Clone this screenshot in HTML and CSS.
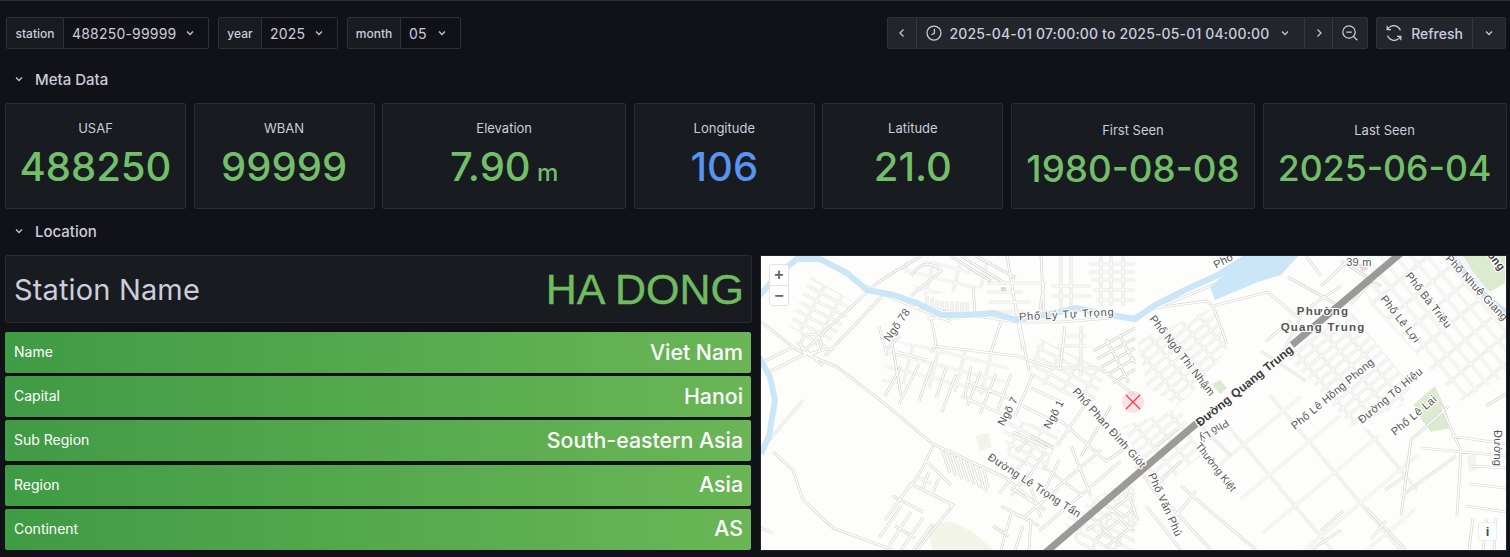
FILE: index.html
```html
<!DOCTYPE html>
<html lang="en">
<head>
<meta charset="utf-8">
<title>Station dashboard</title>
<link rel="stylesheet" href="styles.css">
</head>
<body>
<div class="page">
  <header class="toolbar">
    <div class="vars">
      <div class="var"><span class="var-label lab-station">station</span><span class="var-value val-station">488250-99999<svg class="chev" viewBox="0 0 16 16"><path d="M5 6.5 8 9.5l3-3"/></svg></span></div>
      <div class="var"><span class="var-label lab-year">year</span><span class="var-value val-year">2025<svg class="chev" viewBox="0 0 16 16"><path d="M5 6.5 8 9.5l3-3"/></svg></span></div>
      <div class="var"><span class="var-label lab-month">month</span><span class="var-value val-month">05<svg class="chev" viewBox="0 0 16 16"><path d="M5 6.5 8 9.5l3-3"/></svg></span></div>
    </div>
    <div class="actions">
      <div class="btn-group time-group">
        <span class="btn btn-nav"><svg class="chev" viewBox="0 0 16 16"><path d="M9.5 4.5 6 8l3.5 3.5"/></svg></span>
        <span class="btn btn-range">
          <svg class="ico" viewBox="0 0 16 16"><circle cx="8" cy="8" r="7"/><path d="M8.4 3.8V8.4L5.4 9.8"/></svg>
          <span class="range-text">2025-04-01 07:00:00 to 2025-05-01 04:00:00</span>
          <svg class="chev" viewBox="0 0 16 16"><path d="M5 6.5 8 9.5l3-3"/></svg>
        </span>
        <span class="btn btn-nav"><svg class="chev" viewBox="0 0 16 16"><path d="M6.5 4.5 10 8l-3.5 3.5"/></svg></span>
        <span class="btn btn-zoom"><svg class="ico" viewBox="0 0 16 16"><circle cx="7" cy="7" r="6.2"/><path d="M4.2 7h5.6M11.5 11.5l3.8 3.8"/></svg></span>
      </div>
      <div class="btn-group refresh-group">
        <span class="btn btn-refresh">
          <svg class="ico" viewBox="0 0 16 16"><path d="M14.4 5.4A6.9 6.9 0 0 0 3 2.6L1.2 4.6M1.2 .8v3.8H5M1.6 10.6A6.9 6.9 0 0 0 13 13.4l1.8-2M14.8 15.2v-3.8H11"/></svg>
          <span>Refresh</span>
        </span>
        <span class="btn btn-caret"><svg class="chev" viewBox="0 0 16 16"><path d="M5 6.5 8 9.5l3-3"/></svg></span>
      </div>
    </div>
  </header>

  <h2 class="row-title row-meta"><svg class="chev" viewBox="0 0 16 16"><path d="M5 6.5 8 9.5l3-3"/></svg>Meta Data</h2>

  <section class="stats">
    <div class="stat"><div class="stat-title">USAF</div><div class="stat-value">488250</div></div>
    <div class="stat"><div class="stat-title">WBAN</div><div class="stat-value">99999</div></div>
    <div class="stat"><div class="stat-title">Elevation</div><div class="stat-value">7.90<span class="unit"> m</span></div></div>
    <div class="stat"><div class="stat-title">Longitude</div><div class="stat-value blue">106</div></div>
    <div class="stat"><div class="stat-title">Latitude</div><div class="stat-value">21.0</div></div>
    <div class="stat stat-date stat-first"><div class="stat-title">First Seen</div><div class="stat-value">1980-08-08</div></div>
    <div class="stat stat-date stat-last"><div class="stat-title">Last Seen</div><div class="stat-value">2025-06-04</div></div>
  </section>

  <h2 class="row-title row-location"><svg class="chev" viewBox="0 0 16 16"><path d="M5 6.5 8 9.5l3-3"/></svg>Location</h2>

  <section class="location">
    <div class="info">
      <div class="station-name"><span class="sn-label">Station Name</span><span class="sn-value">HA DONG</span></div>
      <div class="gauges">
        <div class="gauge"><span class="g-label">Name</span><span class="g-value">Viet Nam</span></div>
        <div class="gauge"><span class="g-label">Capital</span><span class="g-value">Hanoi</span></div>
        <div class="gauge"><span class="g-label">Sub Region</span><span class="g-value">South-eastern Asia</span></div>
        <div class="gauge"><span class="g-label">Region</span><span class="g-value">Asia</span></div>
        <div class="gauge"><span class="g-label">Continent</span><span class="g-value">AS</span></div>
      </div>
    </div>
    <div class="map">
      <svg class="map-svg" viewBox="0 0 745 294" width="745" height="294">
        <defs>
          <pattern id="p-dense" width="17" height="9" patternUnits="userSpaceOnUse" patternTransform="rotate(-40)">
            <path class="pc" d="M0 4.5H17M8 0V9"/><path class="pf" d="M0 4.5H17M8 0V9"/>
          </pattern>
          <pattern id="p-east" width="22" height="12" patternUnits="userSpaceOnUse" patternTransform="rotate(50)">
            <path class="pc" d="M0 6H22M11 0V12"/><path class="pf" d="M0 6H22M11 0V12"/>
          </pattern>
          <pattern id="p-west" width="20" height="9" patternUnits="userSpaceOnUse" patternTransform="rotate(28)">
            <path class="pc" d="M0 4.5H20M10 0V9"/><path class="pf" d="M0 4.5H20M10 0V9"/>
          </pattern>
          <pattern id="p-soft" width="26" height="14" patternUnits="userSpaceOnUse" patternTransform="rotate(14)">
            <path class="pc" d="M0 7H26M13 0V14"/><path class="pf" d="M0 7H26M13 0V14"/>
          </pattern>
          <pattern id="p-big" width="52" height="40" patternUnits="userSpaceOnUse" patternTransform="rotate(-40 500 200)">
            <path class="pc" d="M0 20H52M26 0V40"/><path class="pf" d="M0 20H52M26 0V40"/>
          </pattern>
          <path id="streets" d="
            M0 66 36 94 76 111 119 144 172 188 245 222 272 245 M0 107 32 91 M12 196 32 214 42 244 72 272 132 294 M0 272 12 277 M42 144 0 194
            M46 92 116 27 130 18 160 0 M64 100 126 35 M36 86 62 110
            M8 116 40 100 70 92 M50 78 a10 10 0 1 0 .1 0
            M150 20c10-15 20-15 30-5L150 40M190 0 230 25M200 0 245 28M215 0 255 22
            M166 40v14M171 42v13M176 44v12M181 45v13M186 45v13M191 45v13M196 45v13M201 46v12M206 46v12M212 30l2 28
            M226 27H283L278 60M226 36H262M228 46H270M232 56H270M246 0 262 95M280 0 283 58
            M328 8h46M328 16h46M330 24h44M332 34h42M335 44h39M340 0v50M350 0v50M362 0v50M300 0v56M310 0v54M290 30h40M290 40h40
            M104 30 150 50 190 66M150 50 255 66 300 66 374 60 425 40 470 22M166 62H200M172 90 256 100 290 112 340 112 374 140
            M258 64 268 115M170 62l5 25-5 10M240 66l-10 30M332 95 374 72M336 103 374 82M340 111 374 92M346 119 374 102M352 127 374 113M345 83 368 127M358 78 374 108M300 80h26M296 90h30M320 70v50M304 70l-5 45
            M130 80l10 60M118 70l8 30M124 95l15-15M136 96l30 8M140 110l-16 30M158 108l-20 40M172 105l-14 40M185 112l-10 30M195 118l-14 38M210 110l-6 30M220 115l-14 35M235 118l-16 40M250 118l-14 38M205 125l50 20M200 140l45 20M272 118l-18 42M270 132l30 14M262 150l28 14
            M172 190 160 215 150 230M181 193l8 24M187 196l8 24M193 199l8 24M199 202l8 24M205 205l8 24M211 208l8 24M217 211l6 22M223 214l4 18M165 205l25 24M158 222l12 5M168 216l-6 16M178 222l-6 14M226 236l-12-15
            M124 264 150 228 192 249 156 294M134 270l20 12M132 240l30 16M140 250 118 282M150 256 128 290M162 262 140 294M172 268 152 294
            M238 238l26-34M250 240l18-24M240 250l38 20M250 232l34 22M262 262l36-30M280 262l-10-30M255 196l12-12M270 180l22 12M252 176l34 16M284 196l-22 34M298 204l-14 30M232 270l16 10M250 258l-10 36M262 270l-8 24M270 262l-2 32
            M300 165 345 205 368 190M280 170 300 165M330 140 296 190M350 150 320 200M310 190 330 240M282 210l40 30M278 275 360 205M295 232 340 194
            M325 275l48-38M335 283l40-32M345 291l30-24M330 260l30 30M345 248l28 28
            M452 50 507 36 535 60 580 30M452 50 466 88M527 21 580 51M395 52 445 45 452 50
            M560 20 545 0M580 5 620 30M592 0 560 30M615 20 590 48M540 60 520 100M500 95 545 125M505 85 530 65
            M688 150 650 184 640 260M725 150 745 138M690 180 745 188M680 150 700 195M660 192 745 200
            M710 210 745 212M708 228 745 232M705 250 745 256M700 196 696 260M726 262 722 294M735 262 733 294M712 262 708 294
            M420 230 495 294M400 240 450 294M440 170 470 200M375 210 405 250M385 250 420 294M363 225l14 40M395 190l22-18M420 205l-20 20M435 235l-20 25
            M560 275l22-20M640 240l55-40M550 294l30-20M605 252l40 42M625 265l-15 18M624 234l20-14
            "/>
        </defs>
        <rect class="m-bg" width="745" height="294"/>
        <path class="m-park" d="M166 271l22-6 22 10 23 19H172ZM215 180l12-3 4 14-12 4zM706 200l8-2 2 16-8 2z"/>
        <path class="m-park-2" d="M702 0H744V27L727 37 711 14ZM451 128l8-4 7 8-7 6zM653 148 674 130 684 152 690 172 670 176 658 160Z"/>
        <path class="f-dense" d="M376 85 452 52 468 90 440 128 416 150 386 130ZM524 100 590 55 650 130 640 150 590 170 555 130ZM362 170 420 152 440 200 392 238Z"/>
        <path class="f-east" d="M590 0 700 0 745 55 745 120 700 145 610 50Z"/>
        <path class="f-west" d="M50 20 96 48 62 96 28 70ZM240 160 300 175 285 215 248 205ZM302 265 340 238 374 220 374 294 320 294ZM278 82 345 115 332 150 266 122Z"/>
        <path class="f-soft" d="M135 5 230 5 240 30 160 40ZM128 84 250 102 240 142 120 126Z"/>
        <path class="f-big" d="M445 190 520 130 640 190 660 200 650 294 512 294Z"/>
        <use href="#streets" class="m-road-case"/>
        <use href="#streets" class="m-road-fill"/>
        <path class="m-water" d="M449 31 484 0H537L520 19 497 26 471 37 454 44Z"/>
        <path class="m-river" d="M-4 42 19 17 36 3H59L86 17 106 34 132 39 156 47 180 59H206L232 57 256 64 283 59 316 52 349 59 374 63 394 49 424 34 457 19 490-2"/>
        <path class="m-river" d="M690-2 704 17 721 37 746 58M-2 101 9 121 14 144 8 180 0 198"/>
        <rect class="m-land" x="240" y="31" width="5" height="4"/>
        <path class="m-pink" d="M422 106l5-4 4 5-5 3zM597 8l8-1 2 6-6 3z"/>
        <path class="m-highway" d="M284 297 436 167M531 89 640-3"/>
        <g class="m-marker">
          <circle cx="372" cy="146" r="11"/>
          <path d="M365 139 379 153M379 139 365 153"/>
        </g>
        <g class="m-labels">
          <text transform="translate(139 71) rotate(-55)" text-anchor="middle">Ngõ 78</text>
          <text transform="translate(306 62) rotate(-3)" text-anchor="middle" class="spaced">Phố Lý Tự Trọng</text>
          <text transform="translate(388 63) rotate(52)">Phố Ngô Thì Nhậm</text>
          <text transform="translate(464 8) rotate(-28)" text-anchor="middle">Phố</text>
          <text transform="translate(598 10)" text-anchor="middle">39 m</text>
          <text class="place" x="562" y="59" text-anchor="middle">Phường</text>
          <text class="place" x="562" y="75" text-anchor="middle">Quang Trung</text>
          <text transform="translate(644 20) rotate(52)">Phố Bà Triệu</text>
          <text transform="translate(619 43) rotate(52)">Phố Lê Lợi</text>
          <text transform="translate(684 3) rotate(47)">Phố Nhuệ Giang</text>
          <text class="strong" transform="translate(726 -1) rotate(52)">ông</text>
          <text class="road" transform="translate(439 171) rotate(-39)">Đường Quang Trung</text>
          <text transform="translate(250 157) rotate(-62)" text-anchor="middle">Ngõ 7</text>
          <text transform="translate(296 160) rotate(-62)" text-anchor="middle">Ngõ 1</text>
          <text transform="translate(311 136) rotate(48)">Phố Phan Đình Giót</text>
          <text transform="translate(226 203) rotate(33)">Đường Lê Trọng Tấn</text>
          <text transform="translate(387 219) rotate(66)">Phố Văn Phú</text>
          <text class="tight" transform="translate(465 163) rotate(148)">Phố Lý</text>
          <text class="tight" transform="translate(434 190) rotate(52)">Thường Kiệt</text>
          <text transform="translate(534 174) rotate(-40)">Phố Lê Hồng Phong</text>
          <text transform="translate(601 168) rotate(-40)">Đường Tô Hiệu</text>
          <text transform="translate(634 180) rotate(-40)">Phố Lê Lai</text>
          <text transform="translate(733 174) rotate(90)">Đường</text>
        </g>
      </svg>
      <div class="zoom-ctl"><span class="zoom-btn">+</span><span class="zoom-btn">−</span></div>
      <span class="info-btn">i</span>
    </div>
  </section>
</div>
</body>
</html>
```
FILE: styles.css
```css
* { box-sizing: border-box; }
html, body { margin: 0; height: 100%; }
body {
  background: #111217;
  color: #ccccdc;
  font-family: Inter, "Liberation Sans", sans-serif;
  overflow: hidden;
}
.page { border-top: 1px solid #2d2f34; padding: 16px 4px 0 5px; height: 557px; }

.chev { width: 16px; height: 16px; fill: none; stroke: #c4c4d2; stroke-width: 1.3; flex: none; }
.ico { width: 16px; height: 16px; fill: none; stroke: #ccccdc; stroke-width: 1.25; flex: none; }

.toolbar { display: flex; justify-content: space-between; height: 32px; padding-left: 1px; }
.vars { display: flex; gap: 9px; }
.var { display: flex; height: 32px; border: 1px solid #2f3136; border-radius: 2px; font-size: 14px; }
.var-label { display: flex; align-items: center; justify-content: center; background: #181b1f; border-right: 1px solid #2f3136; font-size: 12px; font-weight: 500; }
.lab-station { width: 57px; }
.lab-year { width: 43px; }
.lab-month { width: 53px; }
.var-value { display: flex; align-items: center; justify-content: space-between; padding: 0 10px 0 8px; background: #111217; letter-spacing: .2px; }
.val-station { width: 144px; }
.val-year { width: 75px; }
.val-month { width: 59px; }

.actions { display: flex; gap: 8px; }
.btn-group { display: flex; height: 32px; background: #22252b; border: 1px solid #2f3136; border-radius: 2px; }
.btn { display: flex; align-items: center; justify-content: center; font-size: 14px; font-weight: 500; }
.btn + .btn { border-left: 1px solid #36383d; }
.btn-nav { width: 28px; }
.btn-range { width: 388px; gap: 8px; padding-right: 2px; }
.range-text { letter-spacing: .16px; }
.btn-zoom { width: 35px; }
.btn-refresh { width: 95px; gap: 9px; }
.btn-caret { width: 33px; }

.row-title { display: flex; align-items: center; gap: 6px; margin: 0; font-size: 15px; font-weight: 500; padding-left: 6px; color: #ccccdc; }
.row-meta { margin-top: 14px; height: 32px; }
.row-location { margin-top: 6px; height: 32px; }
.row-title .chev { margin-right: 2px; }

.stats {
  display: grid;
  grid-template-columns: 181px 181px 244px 181px 181px 244px 244px;
  column-gap: 7.6px;
  margin-top: 8px;
  height: 106px;
}
.stat { background: #181b1f; border: 1px solid #2a2c31; border-radius: 2px; text-align: center; padding-top: 16px; min-width: 0; }
.stat-title { font-size: 13px; line-height: 16px; }
.stat-value { font-size: 40px; line-height: 48px; font-weight: 500; color: #73bf69; margin-top: 7px; white-space: nowrap; }
.stat-value.blue { color: #5794f2; }
.unit { font-size: 24px; }
.stat-date { padding-top: 18px; }
.stat-date .stat-value { line-height: 44px; margin-top: 9px; }
.stat-first .stat-value { font-size: 36.8px; }
.stat-last .stat-value { font-size: 35.6px; }

.location { display: grid; grid-template-columns: 747px 747px; column-gap: 8px; margin-top: 8px; }
.info { min-width: 0; }
.station-name {
  display: flex; justify-content: space-between; align-items: center;
  height: 68px; padding: 0 7px 0 8px;
  background: #181b1f; border: 1px solid #2a2c31; border-radius: 2px;
}
.sn-label { font-size: 29px; letter-spacing: .15px; }
.sn-value { font-size: 43px; color: #6fbb5f; font-family: "Liberation Sans", sans-serif; -webkit-text-stroke: .4px #6fbb5f; }
.gauges { display: flex; flex-direction: column; gap: 3.2px; margin-top: 9px; padding-right: 1px; }
.gauge {
  display: flex; justify-content: space-between; align-items: center;
  height: 41px; padding: 0 8px 2px 9px; border-radius: 2px; color: #fff;
  background: linear-gradient(90deg, #409b45, #6ab656);
}
.g-label { font-size: 14px; }
.g-value { font-size: 21.3px; font-weight: 500; }

.map { position: relative; height: 296px; border: 1px solid #22242a; background: #fdfdfc; overflow: hidden; }
.map-svg { display: block; }
.m-bg { fill: #fdfdfc; }
.m-water { fill: #cbe6f6; }
.m-river { fill: none; stroke: #cbe6f6; stroke-width: 6; }
.m-park { fill: #f1f4e6; }
.m-park-2 { fill: #dcebcf; }
.m-land { fill: #dcdcc8; }
.m-pink { fill: #eed6d2; }
.pc { fill: none; stroke: #d8d8d5; stroke-width: 2.6; }
.pf { fill: none; stroke: #fff; stroke-width: 1.3; }
.f-dense { fill: url(#p-dense); }
.f-east { fill: url(#p-east); }
.f-west { fill: url(#p-west); }
.f-soft { fill: url(#p-soft); }
.f-big { fill: url(#p-big); }
.m-road-case { fill: none; stroke: #d2d2cf; stroke-width: 2.7; }
.m-road-fill { fill: none; stroke: #fff; stroke-width: 1.4; }
.m-highway { fill: none; stroke: #9a9a9a; stroke-width: 7; }
.m-marker circle { fill: rgba(242, 73, 92, .14); }
.m-marker path { stroke: #ee3f55; stroke-width: 1.3; fill: none; }
.m-labels text {
  font-family: "Liberation Sans", sans-serif; font-size: 11px; fill: #555;
  stroke: #fff; stroke-width: 2.2px; paint-order: stroke; letter-spacing: .3px;
}
.m-labels .spaced { letter-spacing: .9px; }
.m-labels .tight { letter-spacing: 0; font-size: 10.5px; }
.m-labels .place { font-size: 11.5px; font-weight: 700; letter-spacing: 1.2px; fill: #555; }
.m-labels .road { font-size: 12px; font-weight: 700; fill: #3a3a3a; letter-spacing: .15px; }
.m-labels .strong { font-weight: 700; fill: #444; }

.zoom-ctl {
  position: absolute; left: 8px; top: 8px; width: 20px; display: flex; flex-direction: column;
  background: #fff; border: 1px solid #e3e3e3; border-radius: 3px;
}
.zoom-btn { height: 20px; display: flex; align-items: center; justify-content: center; font-size: 16px; line-height: 1; font-weight: 700; color: #666; font-family: "Liberation Sans", sans-serif; }
.zoom-btn + .zoom-btn { border-top: 1px solid #e3e3e3; }
.info-btn {
  position: absolute; right: 9px; bottom: 9px; width: 19px; height: 19px;
  display: flex; align-items: center; justify-content: center;
  background: #fff; border: 1px solid #ececec; border-radius: 3px;
  font: 700 13px "Liberation Sans", sans-serif; color: #4a4a4a;
}
```
